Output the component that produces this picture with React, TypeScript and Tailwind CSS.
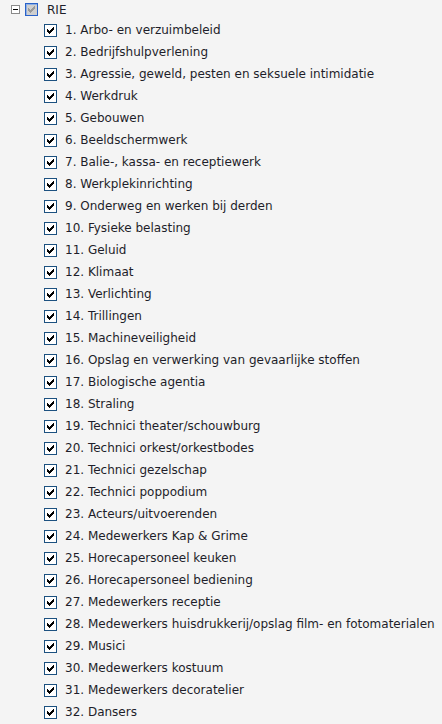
import React from "react";

const items = [
  "1. Arbo- en verzuimbeleid",
  "2. Bedrijfshulpverlening",
  "3. Agressie, geweld, pesten en seksuele intimidatie",
  "4. Werkdruk",
  "5. Gebouwen",
  "6. Beeldschermwerk",
  "7. Balie-, kassa- en receptiewerk",
  "8. Werkplekinrichting",
  "9. Onderweg en werken bij derden",
  "10. Fysieke belasting",
  "11. Geluid",
  "12. Klimaat",
  "13. Verlichting",
  "14. Trillingen",
  "15. Machineveiligheid",
  "16. Opslag en verwerking van gevaarlijke stoffen",
  "17. Biologische agentia",
  "18. Straling",
  "19. Technici theater/schouwburg",
  "20. Technici orkest/orkestbodes",
  "21. Technici gezelschap",
  "22. Technici poppodium",
  "23. Acteurs/uitvoerenden",
  "24. Medewerkers Kap & Grime",
  "25. Horecapersoneel keuken",
  "26. Horecapersoneel bediening",
  "27. Medewerkers receptie",
  "28. Medewerkers huisdrukkerij/opslag film- en fotomaterialen",
  "29. Musici",
  "30. Medewerkers kostuum",
  "31. Medewerkers decoratelier",
  "32. Dansers",
];

function Check({ disabled = false }: { disabled?: boolean }) {
  return (
    <svg width="13" height="13" viewBox="0 0 13 13" className="shrink-0 block" shapeRendering="crispEdges">
      <rect x="0" y="0" width="13" height="13" fill={disabled ? "#2a62c8" : "#1c5180"} />
      <rect x="1" y="1" width="11" height="11" fill={disabled ? "#8fb0e4" : "#ffffff"} />
      <rect x="2" y="2" width="10" height="10" fill={disabled ? "#cfcfcf" : "#ffffff"} />
      {[
        [3, 5], [3, 6], [3, 7],
        [4, 6], [4, 7], [4, 8],
        [5, 7], [5, 8], [5, 9],
        [6, 6], [6, 7], [6, 8],
        [7, 5], [7, 6], [7, 7],
        [8, 4], [8, 5], [8, 6],
        [9, 3], [9, 4], [9, 5],
      ].map(([x, y], i) => (
        <rect key={i} x={x} y={y} width="1" height="1" fill={disabled ? "#9a9a9a" : "#000000"} />
      ))}
    </svg>
  );
}

function Expander() {
  return (
    <svg width="9" height="9" viewBox="0 0 9 9" className="shrink-0 block" shapeRendering="crispEdges">
      <rect x="0" y="0" width="9" height="9" fill="#8a8a8a" />
      <rect x="1" y="1" width="7" height="7" fill="#ffffff" />
      <rect x="2" y="4" width="5" height="1" fill="#000000" />
    </svg>
  );
}

export default function App() {
  return (
    <div
      className="w-[442px] h-[724px] bg-[#f4f4f4] text-[#1e1e2a] text-[12px] overflow-hidden"
      style={{ fontFamily: '"DejaVu Sans", Verdana, sans-serif' }}
    >
      <div className="flex items-center h-[19px] pl-[11px]">
        <Expander />
        <div className="ml-[5px]">
          <Check disabled />
        </div>
        <span className="ml-[9px] leading-none">RIE</span>
      </div>
      <div className="flex flex-col">
        {items.map((t) => (
          <div key={t} className="flex items-center h-[22px] pl-[44px]">
            <Check />
            <span className="ml-[8px] leading-none whitespace-nowrap">{t}</span>
          </div>
        ))}
      </div>
    </div>
  );
}
